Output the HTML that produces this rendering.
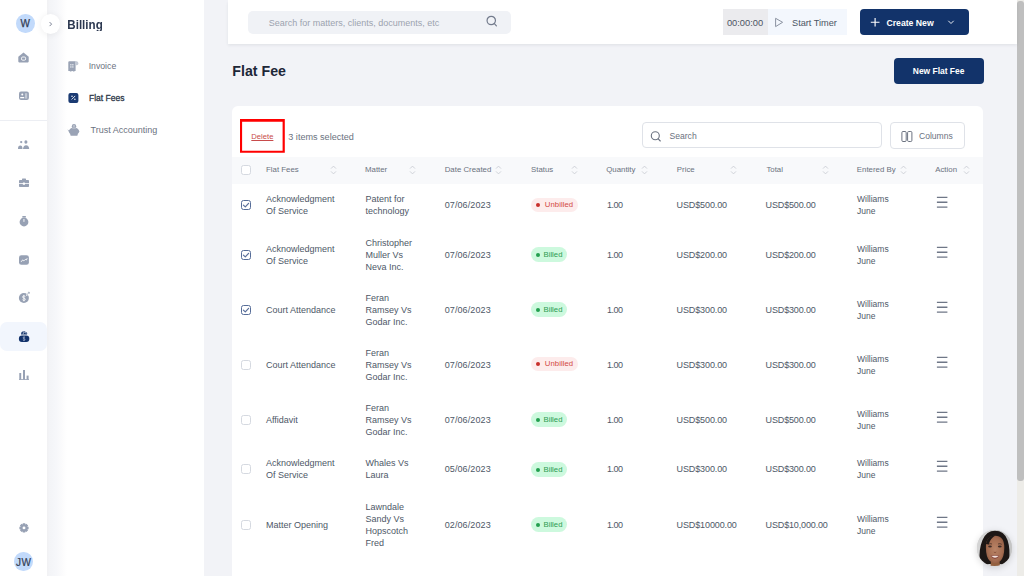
<!DOCTYPE html>
<html><head><meta charset="utf-8">
<style>
*{box-sizing:border-box;margin:0;padding:0}
html,body{width:1024px;height:576px;overflow:hidden;font-family:"Liberation Sans",sans-serif;background:#f2f3f7;color:#333}
.abs{position:absolute}
#rail{position:absolute;left:0;top:0;width:47px;height:576px;background:#fff}
#side{position:absolute;left:47px;top:0;width:157px;height:576px;background:#fff}
#sideShade{position:absolute;left:47px;top:0;width:20px;height:576px;background:linear-gradient(90deg,#f1f1f3 0,#f3f4f7 2.5px,#f6f7fa 9px,#fbfbfc 15px,#fff 20px)}
#main{position:absolute;left:204px;top:0;width:813px;height:576px;background:#f2f3f7}
#scroll{position:absolute;left:1017px;top:0;width:7px;height:576px;background:#edece8}
#thumb{position:absolute;left:1017px;top:1px;width:7px;height:480px;background:#bfbfbf;border-radius:3px}
.av{position:absolute;border-radius:50%;background:#c2dafb;color:#2a3142;font-weight:bold;text-align:center}
.t{position:absolute;white-space:nowrap;line-height:12px;height:12px}
#header{position:absolute;left:228px;top:0;width:789px;height:44px;background:#fff;box-shadow:0 1.5px 3px rgba(30,40,60,0.075)}
.btn{position:absolute;background:#12336a;border-radius:4px}
#card{position:absolute;left:232px;top:106px;width:751px;height:490px;background:#fff;border-radius:6px}
#thead{position:absolute;left:232px;top:156.5px;width:751px;height:27px;background:#f8f9fb}
.th{position:absolute;top:163.8px;font-size:7.85px;color:#6b7280;line-height:12px;white-space:nowrap}
.sort{position:absolute;top:165px}
.cell{position:absolute;font-size:9px;color:#4e5867;line-height:12px;display:flex;align-items:center;white-space:nowrap;padding-top:0.8px}
.cb{position:absolute;width:10px;height:10px;border:1px solid #d5d9e0;border-radius:2.5px;background:#fff}
.cb.on{border-color:#566d98;border-width:1.15px}
.pill{position:absolute;height:14.2px;border-radius:7.5px;font-size:7.75px;line-height:14.2px;padding-left:12.5px;white-space:nowrap}
.pill.b:before{background:#23a04f;top:5.6px}
.pill.b{background:#cdf9de;color:#2e9c52;width:36px;height:15px;line-height:15px}
.pill.u{background:#fdecec;color:#d24a45;width:47.3px;padding-left:13.8px;letter-spacing:0.05px}
.pill:before{content:"";position:absolute;left:5px;top:5px;width:4px;height:4px;border-radius:50%;background:currentColor}
.pill.u:before{background:#c8302b}
.ham{position:absolute;width:12px;height:13px}
</style></head><body>
<div id="main"></div>
<div id="rail"></div>
<div id="side"></div>
<div id="sideShade"></div>
<div id="scroll"></div><div id="thumb"></div>

<!-- rail -->
<div class="abs" style="left:0;top:322.3px;width:46.5px;height:28.4px;background:#f2f6fd;border-radius:7px"></div>
<div class="av" style="left:15.8px;top:14.1px;width:18.8px;height:19.3px;font-size:10px;line-height:20.2px;font-weight:normal;-webkit-text-stroke:0.25px #333d52;color:#333d52">W</div>
<div class="abs" style="left:40.5px;top:14.2px;width:19px;height:19.5px;border-radius:50%;background:#fff;box-shadow:0 1px 7px rgba(0,0,0,0.07)"></div>
<svg class="abs" style="left:44px;top:18px" width="12" height="12" viewBox="44 18 12 12"><path d="M49.6 22.1 L51.6 24.1 L49.6 26.1" fill="none" stroke="#7d8496" stroke-width="1"/></svg>
<svg class="abs" style="left:0;top:0" width="47" height="576" viewBox="0 0 47 576">
 <g fill="#97a1b4">
  <!-- home -->
  <path d="M18.3 56.8 L23.5 52.5 L28.7 56.8 L28.7 61.6 Q28.7 62.4 27.9 62.4 L19.1 62.4 Q18.3 62.4 18.3 61.6 Z"/>
  <!-- card -->
  <rect x="19" y="91.6" width="9.9" height="8.5" rx="2"/>
  <!-- people -->
  <circle cx="21.2" cy="142.1" r="1.15"/>
  <ellipse cx="25.9" cy="142" rx="1.55" ry="1.75"/>
  <path d="M18 149 Q18 145.6 20.3 145.6 Q22.5 145.6 22.5 149 Z"/>
  <path d="M23 149 Q23.3 145.2 26.1 145.2 Q29 145.2 29.2 149 Z"/>
  <!-- briefcase -->
  <rect x="22" y="178.5" width="4" height="2" rx="0.6"/>
  <rect x="19" y="180" width="10" height="7" rx="0.8"/>
  <!-- stopwatch -->
  <rect x="22.3" y="215.9" width="3.6" height="1.5" rx="0.4"/>
  <circle cx="24" cy="222" r="4.4"/>
  <!-- chart square -->
  <rect x="19" y="255.2" width="9.9" height="9.6" rx="2.4"/>
  <!-- coin -->
  <circle cx="23.9" cy="298" r="5"/>
  <!-- bars -->
  <rect x="19.3" y="373" width="1.9" height="6.6"/>
  <rect x="23" y="370" width="2" height="9.6"/>
  <rect x="26.6" y="375.6" width="2" height="4"/>
  <rect x="19" y="379" width="10" height="0.8"/>
  <!-- gear -->
  <path d="M22.57 524.70 L22.76 523.31 L25.24 523.31 L25.43 524.70 L25.25 524.63 L26.37 523.78 L28.12 525.53 L27.27 526.65 L27.20 526.47 L28.59 526.66 L28.59 529.14 L27.20 529.33 L27.27 529.15 L28.12 530.27 L26.37 532.02 L25.25 531.17 L25.43 531.10 L25.24 532.49 L22.76 532.49 L22.57 531.10 L22.75 531.17 L21.63 532.02 L19.88 530.27 L20.73 529.15 L20.80 529.33 L19.41 529.14 L19.41 526.66 L20.80 526.47 L20.73 526.65 L19.88 525.53 L21.63 523.78 L22.75 524.63 Z"/>
 </g>
 <g fill="#fff">
  <rect x="21.5" y="57" width="4.1" height="3.2" rx="1.2" fill="none" stroke="#fff" stroke-width="0.9"/>
  <circle cx="22.25" cy="94.6" r="1"/>
  <rect x="20.1" y="97.1" width="4.2" height="1.1" rx="0.5"/>
  <rect x="19" y="183.1" width="10" height="0.8"/>
  <rect x="22.8" y="182.5" width="2.2" height="2.3" rx="0.5"/>
  <rect x="23.5" y="219" width="0.9" height="3" rx="0.4"/>
  <path d="M21.3 261.6 L22.7 259.9 L23.8 260.9 L25.3 259.4 L26.5 259.9 L27 258.6" fill="none" stroke="#fff" stroke-width="0.9" stroke-linecap="round"/>
  <circle cx="24" cy="527.9" r="1.45"/>
 </g>
 <rect x="25" y="93.2" width="2.2" height="5.4" fill="#c3c9d4"/>
 <!-- coin $ and arrow -->
 <path d="M25.2 296.6 Q24.9 295.9 23.9 295.9 Q22.6 295.9 22.6 297 Q22.6 297.9 23.9 298.1 Q25.3 298.3 25.3 299.3 Q25.3 300.4 23.9 300.4 Q22.9 300.4 22.5 299.7 M23.9 294.9 L23.9 301.3" fill="none" stroke="#fff" stroke-width="0.85"/>
 <path d="M26.3 295.4 L29.3 292.2 M27.6 292 L29.5 292 L29.5 294" fill="none" stroke="#fff" stroke-width="1.5"/>
 <path d="M26.6 295 L29.1 292.5 M27.9 292.3 L29.3 292.3 L29.3 293.7" fill="none" stroke="#97a1b4" stroke-width="0.8"/>
 <!-- money bag -->
 <g fill="#12326b">
  <path d="M21 334.6 L21.4 332.6 Q22 331.2 23.3 331.4 L23.7 331.6 Q24.3 331 24.9 331.6 L26.8 332.4 Q27.3 332.8 27.2 333.6 L27 334.6 Z"/>
  <rect x="18.9" y="335.5" width="10.4" height="6.5" rx="3"/>
 </g>
 <path d="M23.4 332.2 L23.2 334.2 M24.3 332.3 L26.6 333.2" stroke="#f1f6fe" stroke-width="0.7" fill="none"/>
 <path d="M25.1 337.6 Q24.8 337.1 24 337.1 Q23.1 337.1 23.1 337.9 Q23.1 338.5 24 338.7 Q25 338.9 25 339.6 Q25 340.4 24 340.4 Q23.2 340.4 22.9 339.9 M24 336.3 L24 341.1" fill="none" stroke="#aebbd4" stroke-width="0.65"/>
</svg>
<div class="abs" style="left:0;top:120px;width:47px;height:1px;background:#eceef3"></div>
<div class="av" style="left:14.2px;top:552px;width:18.6px;height:19.4px;font-size:10px;line-height:21.2px;letter-spacing:0.3px;text-indent:0.3px;font-weight:normal;-webkit-text-stroke:0.2px #333d52;color:#333d52">JW</div>

<!-- side -->
<div class="t" style="left:67.3px;top:17.8px;font-size:11.6px;font-weight:bold;color:#2c3850;transform:scaleY(1.13);transform-origin:0 50%">Billing</div>
<svg class="abs" style="left:60px;top:55px" width="30" height="90" viewBox="60 55 30 90">
 <path d="M68.3 62.2 Q68.3 61.2 69.3 61.2 L75.6 61.2 L75.6 70.9 L74.8 70.9 L74.2 71.6 L73.2 71.6 L72.6 70.9 L71.8 70.9 L71.2 71.6 L70.2 71.6 L69.6 70.9 L68.3 70.9 Z" fill="#9aa3b5"/>
 <path d="M75.2 61.2 L76.8 61.2 Q78.4 61.4 78.4 63.4 Q78.4 65.2 76.8 65.2 L75.2 65.2 Z" fill="#c3c9d4"/>
 <g fill="#dfe3ea"><rect x="70.2" y="64" width="1.3" height="1.5"/><rect x="72.2" y="64" width="1.3" height="1.5"/><rect x="70.2" y="66.2" width="1.3" height="1.5"/><rect x="72.2" y="66.2" width="1.3" height="1.5"/></g>
 <rect x="68.4" y="93" width="10" height="10" rx="2" fill="#1a3a72"/>
 <path d="M71.6 99.5 L75.2 95.9" stroke="#fff" stroke-width="0.85"/>
 <circle cx="72" cy="96.3" r="0.75" fill="#fff"/><circle cx="74.9" cy="99.2" r="0.75" fill="#fff"/>
 <g fill="#9aa3b5">
  <circle cx="74" cy="126.2" r="2.2"/>
  <ellipse cx="74" cy="131.3" rx="5.2" ry="3.7"/>
  <rect x="70.3" y="133.5" width="7.4" height="2.3" rx="0.8"/>
  <path d="M67.3 129.6 L69.5 130.4 L69.2 131.4 Z"/>
 </g>
 <path d="M74 125 L74 127.4" stroke="#e3e6ec" stroke-width="0.8"/>
 <path d="M72.2 128.2 L75.8 128.2" stroke="#e3e6ec" stroke-width="0.5"/>
</svg>
<div class="t" style="left:88.7px;top:59.8px;font-size:8.7px;color:#6b7280">Invoice</div>
<div class="t" style="left:89px;top:92.2px;font-size:8.5px;color:#2d3748;-webkit-text-stroke:0.3px #2d3748">Flat Fees</div>
<div class="t" style="left:90.6px;top:123.7px;font-size:9px;color:#6b7280">Trust Accounting</div>

<!-- header -->
<div id="header"></div>
<div class="abs" style="left:247.5px;top:10.5px;width:263.5px;height:23px;background:#f0f2f6;border-radius:5px"></div>
<div class="t" style="left:268.7px;top:16.5px;font-size:9px;color:#9ca3af">Search for matters, clients, documents, etc</div>
<svg class="abs" style="left:485px;top:13.5px" width="14" height="14" viewBox="0 0 14 14"><circle cx="6.25" cy="6.5" r="4.2" fill="none" stroke="#737b8c" stroke-width="1.2"/><path d="M9.4 9.7 L11.4 11.8" stroke="#737b8c" stroke-width="1.2" stroke-linecap="round"/></svg>
<div class="abs" style="left:722.5px;top:9px;width:45.5px;height:26px;background:#ebebee"></div>
<div class="abs" style="left:768px;top:9px;width:79px;height:26px;background:#f3f7fd"></div>
<div class="t" style="left:726.9px;top:16.8px;font-size:9.3px;color:#4b5563">00:00:00</div>
<svg class="abs" style="left:772px;top:15px" width="14" height="14" viewBox="0 0 14 14"><path d="M3.6 3.3 L10.6 7.3 L3.6 11.6 Z" fill="none" stroke="#858d9c" stroke-width="0.95" stroke-linejoin="round"/></svg>
<div class="t" style="left:792px;top:16.8px;font-size:9.2px;color:#4b5563">Start Timer</div>
<div class="btn" style="left:859.7px;top:9px;width:109px;height:26px"></div>
<svg class="abs" style="left:868px;top:15px" width="14" height="14" viewBox="0 0 14 14"><path d="M7.1 2.9 L7.1 11.6 M2.8 7.25 L11.5 7.25" stroke="#fff" stroke-width="1.15"/></svg>
<div class="t" style="left:886.4px;top:17px;font-size:8.7px;color:#fff;font-weight:bold">Create New</div>
<svg class="abs" style="left:945px;top:18px" width="12" height="9" viewBox="0 0 12 9"><path d="M3.3 2.8 L6 5.5 L8.7 2.8" fill="none" stroke="#fff" stroke-width="0.9"/></svg>

<div class="t" style="left:232.3px;top:63.6px;font-size:14.2px;font-weight:bold;color:#1d2738;height:14px;line-height:14px">Flat Fee</div>
<div class="btn" style="left:893.5px;top:57.6px;width:90.2px;height:26.4px"></div>
<div class="t" style="left:912.8px;top:64.8px;font-size:8.45px;color:#fff;font-weight:bold">New Flat Fee</div>

<div id="card"></div>
<svg class="abs" style="left:238px;top:117px" width="50" height="38" viewBox="238 117 50 38"><path fill="#f00" fill-rule="evenodd" d="M240 119 H284.8 V152.8 H240 Z M242.1 121.8 V150.7 H282.6 V121.8 Z"/></svg>
<div class="t" style="left:251.3px;top:131px;font-size:7.65px;color:#c84b4b;text-decoration:underline">Delete</div>
<div class="t" style="left:288.3px;top:130.6px;font-size:9.08px;color:#6b7280">3 items selected</div>
<div class="abs" style="left:642.3px;top:122.3px;width:240.2px;height:26px;border:1px solid #dfe2e8;border-radius:4px"></div>
<svg class="abs" style="left:648px;top:129px" width="14" height="14" viewBox="0 0 14 14"><circle cx="7.3" cy="6.8" r="4" fill="none" stroke="#6b7280" stroke-width="1.1"/><path d="M10.2 9.8 L12.3 12" stroke="#6b7280" stroke-width="1.1" stroke-linecap="round"/></svg>
<div class="t" style="left:669.4px;top:129.7px;font-size:8.65px;color:#6b7280">Search</div>
<div class="abs" style="left:890.2px;top:122.3px;width:74.5px;height:27.1px;border:1px solid #dfe2e8;border-radius:4px"></div>
<svg class="abs" style="left:900px;top:130px" width="14" height="13" viewBox="0 0 14 13"><rect x="1.9" y="1.5" width="4.3" height="10" rx="1.1" fill="none" stroke="#6b7280" stroke-width="1"/><rect x="7.6" y="1.5" width="4.3" height="10" rx="1.1" fill="none" stroke="#6b7280" stroke-width="1"/></svg>
<div class="t" style="left:919px;top:130px;font-size:8.57px;color:#6b7280">Columns</div>

<div id="thead"></div>
<div class="cb" style="left:241px;top:165px"></div>
<div class="th" style="left:266px">Flat Fees</div>
<svg class="sort" style="left:329.5px" width="7" height="10" viewBox="0 0 7 10"><path d="M1 3.6 L3.5 1.1 L6 3.6 M1 6.4 L3.5 8.9 L6 6.4" fill="none" stroke="#c9cdd4" stroke-width="0.9"/></svg>
<div class="th" style="left:365px">Matter</div>
<svg class="sort" style="left:408.85px" width="7" height="10" viewBox="0 0 7 10"><path d="M1 3.6 L3.5 1.1 L6 3.6 M1 6.4 L3.5 8.9 L6 6.4" fill="none" stroke="#c9cdd4" stroke-width="0.9"/></svg>
<div class="th" style="left:444.7px">Date Created</div>
<svg class="sort" style="left:495.40000000000003px" width="7" height="10" viewBox="0 0 7 10"><path d="M1 3.6 L3.5 1.1 L6 3.6 M1 6.4 L3.5 8.9 L6 6.4" fill="none" stroke="#c9cdd4" stroke-width="0.9"/></svg>
<div class="th" style="left:531px">Status</div>
<svg class="sort" style="left:570.7px" width="7" height="10" viewBox="0 0 7 10"><path d="M1 3.6 L3.5 1.1 L6 3.6 M1 6.4 L3.5 8.9 L6 6.4" fill="none" stroke="#c9cdd4" stroke-width="0.9"/></svg>
<div class="th" style="left:606.25px">Quantity</div>
<svg class="sort" style="left:641.1px" width="7" height="10" viewBox="0 0 7 10"><path d="M1 3.6 L3.5 1.1 L6 3.6 M1 6.4 L3.5 8.9 L6 6.4" fill="none" stroke="#c9cdd4" stroke-width="0.9"/></svg>
<div class="th" style="left:676.8px">Price</div>
<svg class="sort" style="left:730.1px" width="7" height="10" viewBox="0 0 7 10"><path d="M1 3.6 L3.5 1.1 L6 3.6 M1 6.4 L3.5 8.9 L6 6.4" fill="none" stroke="#c9cdd4" stroke-width="0.9"/></svg>
<div class="th" style="left:766.4px">Total</div>
<svg class="sort" style="left:821.7px" width="7" height="10" viewBox="0 0 7 10"><path d="M1 3.6 L3.5 1.1 L6 3.6 M1 6.4 L3.5 8.9 L6 6.4" fill="none" stroke="#c9cdd4" stroke-width="0.9"/></svg>
<div class="th" style="left:856.8px">Entered By</div>
<svg class="sort" style="left:899.8000000000001px" width="7" height="10" viewBox="0 0 7 10"><path d="M1 3.6 L3.5 1.1 L6 3.6 M1 6.4 L3.5 8.9 L6 6.4" fill="none" stroke="#c9cdd4" stroke-width="0.9"/></svg>
<div class="th" style="left:935.2px">Action</div>
<svg class="sort" style="left:962.7px" width="7" height="10" viewBox="0 0 7 10"><path d="M1 3.6 L3.5 1.1 L6 3.6 M1 6.4 L3.5 8.9 L6 6.4" fill="none" stroke="#c9cdd4" stroke-width="0.9"/></svg>
<div class="cb on" style="left:241.2px;top:200.1px"><svg width="10" height="10" viewBox="0 0 10 10" style="position:absolute;left:-1px;top:-1px"><path d="M2.4 5.1 L4.3 6.9 L7.6 3.3" fill="none" stroke="#5a6f9a" stroke-width="1.2" stroke-linecap="round" stroke-linejoin="round"/></svg></div>
<div class="cell" style="left:266px;top:183px;height:44px;"><div>Acknowledgment<br>Of Service</div></div>
<div class="cell" style="left:365.5px;top:183px;height:44px;"><div>Patent for<br>technology</div></div>
<div class="cell" style="left:444.7px;top:183px;height:44px;letter-spacing:0.1px"><div>07/06/2023</div></div>
<div class="pill u" style="left:531px;top:198px">Unbilled</div>
<div class="cell" style="left:606.9px;top:183px;height:44px;letter-spacing:-0.45px"><div>1.00</div></div>
<div class="cell" style="left:676.6px;top:183px;height:44px;letter-spacing:-0.12px"><div>USD$500.00</div></div>
<div class="cell" style="left:765.6px;top:183px;height:44px;letter-spacing:-0.15px"><div>USD$500.00</div></div>
<div class="cell" style="left:857px;top:183px;height:44px;font-size:8.5px;padding-top:0;color:#505a6a"><div>Williams<br>June</div></div>
<svg class="ham" style="left:936px;top:196.10px" viewBox="0 0 12 13"><path d="M0.9 1.4 H11.4 M0.9 6.25 H11.4 M0.9 11.1 H11.4" stroke="#6f7787" stroke-width="1.3"/></svg>
<div class="cb on" style="left:241.2px;top:249.6px"><svg width="10" height="10" viewBox="0 0 10 10" style="position:absolute;left:-1px;top:-1px"><path d="M2.4 5.1 L4.3 6.9 L7.6 3.3" fill="none" stroke="#5a6f9a" stroke-width="1.2" stroke-linecap="round" stroke-linejoin="round"/></svg></div>
<div class="cell" style="left:266px;top:227px;height:55px;"><div>Acknowledgment<br>Of Service</div></div>
<div class="cell" style="left:365.5px;top:227px;height:55px;"><div>Christopher<br>Muller Vs<br>Neva Inc.</div></div>
<div class="cell" style="left:444.7px;top:227px;height:55px;letter-spacing:0.1px"><div>07/06/2023</div></div>
<div class="pill b" style="left:531px;top:247px">Billed</div>
<div class="cell" style="left:606.9px;top:227px;height:55px;letter-spacing:-0.45px"><div>1.00</div></div>
<div class="cell" style="left:676.6px;top:227px;height:55px;letter-spacing:-0.12px"><div>USD$200.00</div></div>
<div class="cell" style="left:765.6px;top:227px;height:55px;letter-spacing:-0.15px"><div>USD$200.00</div></div>
<div class="cell" style="left:857px;top:227px;height:55px;font-size:8.5px;padding-top:0;color:#505a6a"><div>Williams<br>June</div></div>
<svg class="ham" style="left:936px;top:245.60px" viewBox="0 0 12 13"><path d="M0.9 1.4 H11.4 M0.9 6.25 H11.4 M0.9 11.1 H11.4" stroke="#6f7787" stroke-width="1.3"/></svg>
<div class="cb on" style="left:241.2px;top:304.6px"><svg width="10" height="10" viewBox="0 0 10 10" style="position:absolute;left:-1px;top:-1px"><path d="M2.4 5.1 L4.3 6.9 L7.6 3.3" fill="none" stroke="#5a6f9a" stroke-width="1.2" stroke-linecap="round" stroke-linejoin="round"/></svg></div>
<div class="cell" style="left:266px;top:282px;height:55px;"><div>Court Attendance</div></div>
<div class="cell" style="left:365.5px;top:282px;height:55px;"><div>Feran<br>Ramsey Vs<br>Godar Inc.</div></div>
<div class="cell" style="left:444.7px;top:282px;height:55px;letter-spacing:0.1px"><div>07/06/2023</div></div>
<div class="pill b" style="left:531px;top:302px">Billed</div>
<div class="cell" style="left:606.9px;top:282px;height:55px;letter-spacing:-0.45px"><div>1.00</div></div>
<div class="cell" style="left:676.6px;top:282px;height:55px;letter-spacing:-0.12px"><div>USD$300.00</div></div>
<div class="cell" style="left:765.6px;top:282px;height:55px;letter-spacing:-0.15px"><div>USD$300.00</div></div>
<div class="cell" style="left:857px;top:282px;height:55px;font-size:8.5px;padding-top:0;color:#505a6a"><div>Williams<br>June</div></div>
<svg class="ham" style="left:936px;top:300.60px" viewBox="0 0 12 13"><path d="M0.9 1.4 H11.4 M0.9 6.25 H11.4 M0.9 11.1 H11.4" stroke="#6f7787" stroke-width="1.3"/></svg>
<div class="cb" style="left:241.2px;top:359.6px"></div>
<div class="cell" style="left:266px;top:337px;height:55px;"><div>Court Attendance</div></div>
<div class="cell" style="left:365.5px;top:337px;height:55px;"><div>Feran<br>Ramsey Vs<br>Godar Inc.</div></div>
<div class="cell" style="left:444.7px;top:337px;height:55px;letter-spacing:0.1px"><div>07/06/2023</div></div>
<div class="pill u" style="left:531px;top:357px">Unbilled</div>
<div class="cell" style="left:606.9px;top:337px;height:55px;letter-spacing:-0.45px"><div>1.00</div></div>
<div class="cell" style="left:676.6px;top:337px;height:55px;letter-spacing:-0.12px"><div>USD$300.00</div></div>
<div class="cell" style="left:765.6px;top:337px;height:55px;letter-spacing:-0.15px"><div>USD$300.00</div></div>
<div class="cell" style="left:857px;top:337px;height:55px;font-size:8.5px;padding-top:0;color:#505a6a"><div>Williams<br>June</div></div>
<svg class="ham" style="left:936px;top:355.60px" viewBox="0 0 12 13"><path d="M0.9 1.4 H11.4 M0.9 6.25 H11.4 M0.9 11.1 H11.4" stroke="#6f7787" stroke-width="1.3"/></svg>
<div class="cb" style="left:241.2px;top:414.6px"></div>
<div class="cell" style="left:266px;top:392px;height:55px;"><div>Affidavit</div></div>
<div class="cell" style="left:365.5px;top:392px;height:55px;"><div>Feran<br>Ramsey Vs<br>Godar Inc.</div></div>
<div class="cell" style="left:444.7px;top:392px;height:55px;letter-spacing:0.1px"><div>07/06/2023</div></div>
<div class="pill b" style="left:531px;top:412px">Billed</div>
<div class="cell" style="left:606.9px;top:392px;height:55px;letter-spacing:-0.45px"><div>1.00</div></div>
<div class="cell" style="left:676.6px;top:392px;height:55px;letter-spacing:-0.12px"><div>USD$500.00</div></div>
<div class="cell" style="left:765.6px;top:392px;height:55px;letter-spacing:-0.15px"><div>USD$500.00</div></div>
<div class="cell" style="left:857px;top:392px;height:55px;font-size:8.5px;padding-top:0;color:#505a6a"><div>Williams<br>June</div></div>
<svg class="ham" style="left:936px;top:410.60px" viewBox="0 0 12 13"><path d="M0.9 1.4 H11.4 M0.9 6.25 H11.4 M0.9 11.1 H11.4" stroke="#6f7787" stroke-width="1.3"/></svg>
<div class="cb" style="left:241.2px;top:464.1px"></div>
<div class="cell" style="left:266px;top:447px;height:44px;"><div>Acknowledgment<br>Of Service</div></div>
<div class="cell" style="left:365.5px;top:447px;height:44px;"><div>Whales Vs<br>Laura</div></div>
<div class="cell" style="left:444.7px;top:447px;height:44px;letter-spacing:0.1px"><div>05/06/2023</div></div>
<div class="pill b" style="left:531px;top:462px">Billed</div>
<div class="cell" style="left:606.9px;top:447px;height:44px;letter-spacing:-0.45px"><div>1.00</div></div>
<div class="cell" style="left:676.6px;top:447px;height:44px;letter-spacing:-0.12px"><div>USD$300.00</div></div>
<div class="cell" style="left:765.6px;top:447px;height:44px;letter-spacing:-0.15px"><div>USD$300.00</div></div>
<div class="cell" style="left:857px;top:447px;height:44px;font-size:8.5px;padding-top:0;color:#505a6a"><div>Williams<br>June</div></div>
<svg class="ham" style="left:936px;top:460.10px" viewBox="0 0 12 13"><path d="M0.9 1.4 H11.4 M0.9 6.25 H11.4 M0.9 11.1 H11.4" stroke="#6f7787" stroke-width="1.3"/></svg>
<div class="cb" style="left:241.2px;top:519.6px"></div>
<div class="cell" style="left:266px;top:491px;height:67px;"><div>Matter Opening</div></div>
<div class="cell" style="left:365.5px;top:491px;height:67px;"><div>Lawndale<br>Sandy Vs<br>Hopscotch<br>Fred</div></div>
<div class="cell" style="left:444.7px;top:491px;height:67px;letter-spacing:0.1px"><div>02/06/2023</div></div>
<div class="pill b" style="left:531px;top:517px">Billed</div>
<div class="cell" style="left:606.9px;top:491px;height:67px;letter-spacing:-0.45px"><div>1.00</div></div>
<div class="cell" style="left:676.6px;top:491px;height:67px;letter-spacing:-0.12px"><div>USD$10000.00</div></div>
<div class="cell" style="left:765.6px;top:491px;height:67px;letter-spacing:-0.15px"><div>USD$10,000.00</div></div>
<div class="cell" style="left:857px;top:491px;height:67px;font-size:8.5px;padding-top:0;color:#505a6a"><div>Williams<br>June</div></div>
<svg class="ham" style="left:936px;top:515.60px" viewBox="0 0 12 13"><path d="M0.9 1.4 H11.4 M0.9 6.25 H11.4 M0.9 11.1 H11.4" stroke="#6f7787" stroke-width="1.3"/></svg>

<!-- chat avatar -->
<div class="abs" style="left:977.3px;top:530.3px;width:35px;height:35.4px;border-radius:50%;box-shadow:0 2px 7px rgba(0,0,0,0.16);overflow:hidden;background:#cfcfcf">
<svg width="36" height="36" viewBox="0 0 36 36" style="filter:blur(0.4px)">
 <defs><radialGradient id="fg" cx="0.5" cy="0.5" r="0.62"><stop offset="0" stop-color="#b98467"/><stop offset="0.65" stop-color="#a56d51"/><stop offset="1" stop-color="#83513a"/></radialGradient></defs>
 <rect width="36" height="36" fill="#d4d4d4"/>
 <rect x="20" width="16" height="36" fill="#c4c4c4"/>
 <path d="M2.6 31 Q1.8 19 5.5 10 Q9.5 0.8 18 0.8 Q27 0.8 30.5 10 Q33.5 19 32 31 Q28 35.5 24 34 L12 34 Q6 35 2.6 31 Z" fill="#1d1715"/>
 <path d="M13.5 36 L14 31 L22.5 31 L23 36 Z" fill="#93603f"/>
 <path d="M8.9 17.5 Q8.9 5.8 18.1 5.8 Q27.3 5.8 27.3 17.5 Q27.3 27.5 23.3 31 Q20.8 33.2 18.1 33.2 Q15.4 33.2 12.9 31 Q8.9 27.5 8.9 17.5 Z" fill="url(#fg)"/>
 <path d="M8.9 14 Q10.5 5.5 18.5 5.6 Q13.5 8 11.6 14.5 Z" fill="#1d1715"/>
 <ellipse cx="13" cy="16.6" rx="1.9" ry="1" fill="#3e2c27"/>
 <ellipse cx="22.8" cy="16.6" rx="1.9" ry="1" fill="#3e2c27"/>
 <path d="M11.2 14.3 Q13 13.2 15 14 M21 14 Q23 13.2 24.8 14.3" stroke="#3b2620" stroke-width="0.7" fill="none"/>
 <path d="M16.8 22 Q18 23.3 19.3 22" stroke="#7a4634" stroke-width="0.7" fill="none"/>
 <path d="M13.4 25.8 Q18 24.6 22.6 25.8 Q20.6 29 18 29 Q15.4 29 13.4 25.8 Z" fill="#8a4a40"/>
 <path d="M14.4 26 Q18 25.3 21.6 26 Q19.9 27.7 18 27.7 Q16.1 27.7 14.4 26 Z" fill="#f2e2dc"/>
</svg>
</div>
</body></html>
